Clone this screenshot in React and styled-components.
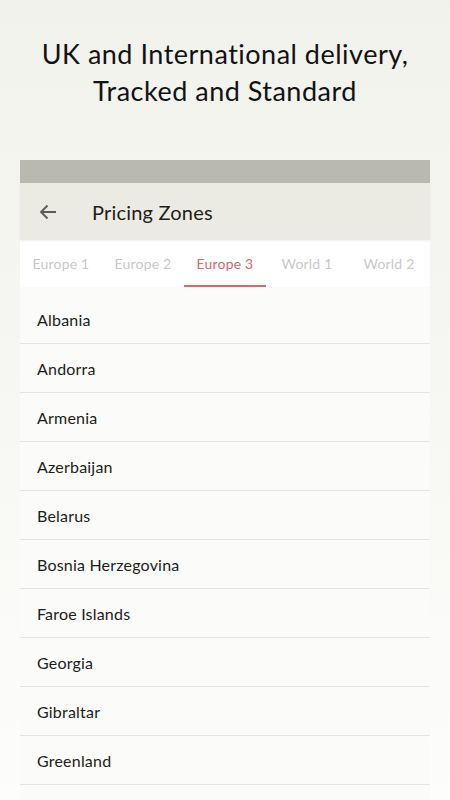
import styled, { createGlobalStyle } from "styled-components";
import { useState } from "react";

const paises = [
  "Albania",
  "Andorra",
  "Armenia",
  "Azerbaijan",
  "Belarus",
  "Bosnia Herzegovina",
  "Faroe Islands",
  "Georgia",
  "Gibraltar",
  "Greenland",
];

const zonas = ["Europe 1", "Europe 2", "Europe 3", "World 1", "World 2"];

const App = () => {
  const [activa, setActiva] = useState(2);

  return (
    <>
      <GlobalStyle />
      <Page>
        <Headline>
          UK and International delivery,
          <br />
          Tracked and Standard
        </Headline>
        <Phone>
          <StatusBar />
          <Toolbar>
            <BackButton aria-label="Back">
              <svg width="18" height="16" viewBox="0 0 18 16" fill="none">
                <path
                  d="M17 8H2M8.5 1.5L2 8l6.5 6.5"
                  stroke="#5a5a56"
                  strokeWidth="1.8"
                />
              </svg>
            </BackButton>
            <ToolbarTitle>Pricing Zones</ToolbarTitle>
          </Toolbar>
          <Tabs>
            {zonas.map((zona, i) => (
              <Tab key={zona} $active={i === activa} onClick={() => setActiva(i)}>
                {zona}
              </Tab>
            ))}
          </Tabs>
          <List>
            {paises.map((pais) => (
              <Row key={pais}>{pais}</Row>
            ))}
          </List>
        </Phone>
      </Page>
    </>
  );
};

const GlobalStyle = createGlobalStyle`
  html, body {
    margin: 0;
    padding: 0;
    height: 800px;
    overflow: hidden;
  }
  body {
    background: linear-gradient(#f2f2ed 0%, #f6f6f2 45%, #fdfdfc 100%);
  }
`;

const Page = styled.div`
  width: 450px;
  height: 800px;
  overflow: hidden;
  padding-top: 35px;
  box-sizing: border-box;
  font-family: Lato, "Noto Sans", sans-serif;
`;

const Headline = styled.h1`
  margin: 0 0 51px;
  text-align: center;
  font-family: Lato, "Noto Sans", sans-serif;
  font-weight: 400;
  font-size: 27px;
  line-height: 37px;
  color: #121212;
  letter-spacing: 0.5px;
`;

const Phone = styled.div`
  margin: 0 20px;
  background: #fbfbf9;
  min-height: 700px;
`;

const StatusBar = styled.div`
  height: 23px;
  background: #b9b9af;
`;

const Toolbar = styled.div`
  height: 57px;
  background: #ecebe3;
  display: flex;
  align-items: center;
  box-shadow: 0 1px 2px rgba(0, 0, 0, 0.06);
  position: relative;
  z-index: 1;
`;

const BackButton = styled.div`
  width: 72px;
  display: flex;
  align-items: center;
  padding-left: 19px;
  box-sizing: border-box;
`;

const ToolbarTitle = styled.div`
  font-size: 20px;
  color: #1d1d1b;
  letter-spacing: 0.2px;
`;

const Tabs = styled.div`
  display: flex;
  height: 47px;
  background: #ffffff;
`;

const Tab = styled.div`
  width: 82px;
  display: flex;
  align-items: center;
  justify-content: center;
  font-size: 14px;
  letter-spacing: 0.2px;
  color: ${(p) => (p.$active ? "#e0656d" : "#c9c9c9")};
  border-bottom: 2px solid ${(p) => (p.$active ? "#e0656d" : "transparent")};
  box-sizing: border-box;
  padding-top: 2px;
  cursor: pointer;
`;

const List = styled.div`
  padding-top: 8px;
`;

const Row = styled.div`
  height: 48px;
  display: flex;
  align-items: center;
  padding-left: 17px;
  font-size: 16px;
  letter-spacing: 0.2px;
  color: #1c1c1c;
  border-bottom: 1px solid #e4e4e2;
`;

export default App;
